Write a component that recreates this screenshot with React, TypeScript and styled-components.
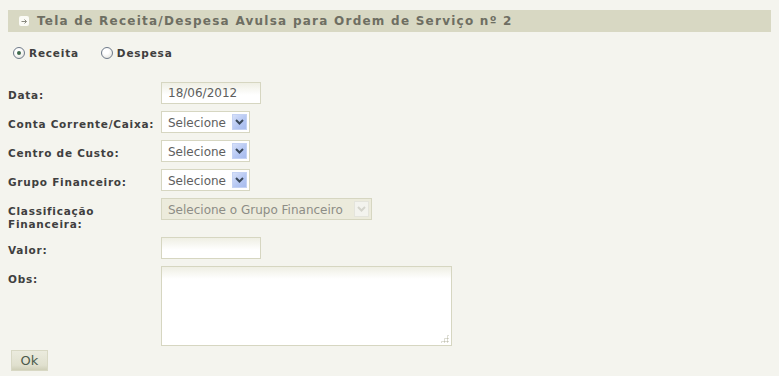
import styled, { createGlobalStyle } from "styled-components";

const GlobalStyle = createGlobalStyle`
  html, body {
    margin: 0;
    padding: 0;
    background: #f4f4ee;
  }
  body {
    font-family: "DejaVu Sans", Verdana, sans-serif;
  }
`;

const Page = styled.div`
  padding: 10px 8px 6px 8px;
`;

const TitleBar = styled.div`
  height: 22px;
  display: flex;
  align-items: center;
  gap: 8px;
  padding-left: 11px;
  background-color: #d8d8c3;
  color: #6e6e62;
  font-size: 12px;
  font-weight: bold;
  letter-spacing: 1.25px;
`;

const TitleIcon = styled.span`
  width: 10px;
  height: 10px;
  border-radius: 2px;
  background: #fbfbf6;
  display: flex;
  align-items: center;
  justify-content: center;
`;

const RadioRow = styled.div`
  display: flex;
  gap: 22px;
  margin-top: 15px;
  padding-left: 5px;
`;

const RadioLabel = styled.label`
  display: flex;
  align-items: center;
  gap: 4px;
  font-size: 10.5px;
  font-weight: bold;
  letter-spacing: 0.8px;
  color: #3f3f3f;
`;

const Radio = styled.input.attrs({ type: "radio" })`
  appearance: none;
  margin: 0;
  width: 12px;
  height: 12px;
  border-radius: 50%;
  border: 1px solid #6f7a8a;
  background: radial-gradient(circle at 40% 35%, #ffffff 30%, #dcdcd4 100%);
  display: grid;
  place-items: center;
  &:checked::after {
    content: "";
    width: 4px;
    height: 4px;
    border-radius: 50%;
    background: #3f6a4c;
  }
`;

const Form = styled.div`
  margin-top: 23px;
  display: flex;
  flex-direction: column;
  gap: 7px;
`;

const Row = styled.div`
  display: flex;
  align-items: flex-start;
`;

const Label = styled.label`
  width: 153px;
  flex-shrink: 0;
  padding-top: 7px;
  font-size: 10.5px;
  font-weight: bold;
  letter-spacing: 0.75px;
  line-height: 12.5px;
  color: #3f3f3f;
`;

const fieldSkin = `
  box-sizing: border-box;
  border: 1px solid #d6d6c1;
  background: linear-gradient(#efefe4 0px, #ffffff 12px);
  font-family: "DejaVu Sans", Verdana, sans-serif;
  font-size: 12px;
  color: #5e5e5e;
  outline: none;
`;

const TextInput = styled.input<{ $w: number }>`
  ${fieldSkin}
  width: ${(p) => p.$w}px;
  height: 22px;
  padding: 0 6px;
`;

const TextArea = styled.textarea`
  ${fieldSkin}
  width: 291px;
  height: 80px;
  margin: 0;
  resize: none;
`;

const SelectWrap = styled.div<{ $w: number; $disabled?: boolean }>`
  position: relative;
  box-sizing: border-box;
  width: ${(p) => p.$w}px;
  height: 22px;
  border: 1px solid #d6d6c1;
  background: ${(p) => (p.$disabled ? "#ecebdc" : "#ffffff")};
`;

const Select = styled.select<{ $disabled?: boolean }>`
  appearance: none;
  width: 100%;
  height: 100%;
  border: none;
  margin: 0;
  padding: 0 0 0 6px;
  background: transparent;
  font-family: "DejaVu Sans", Verdana, sans-serif;
  font-size: 12px;
  color: ${(p) => (p.$disabled ? "#8d8d86" : "#5e5e5e")};
  outline: none;
  opacity: 1;
`;

const Arrow = styled.span<{ $disabled?: boolean }>`
  position: absolute;
  right: 2px;
  top: 2px;
  width: 15px;
  height: 16px;
  pointer-events: none;
  display: flex;
  align-items: center;
  justify-content: center;
  box-sizing: border-box;
  border: 1px solid ${(p) => (p.$disabled ? "#e4e4dc" : "#c4d2f4")};
  background: ${(p) =>
    p.$disabled
      ? "#f3f3ee"
      : "linear-gradient(135deg, #d6e0fa 0%, #b4c6f2 60%, #a8bcee 100%)"};
`;

const Grip = styled.span`
  position: absolute;
  right: 3px;
  bottom: 3px;
  width: 9px;
  height: 9px;
  pointer-events: none;
  background-image: radial-gradient(#c4c4b4 45%, transparent 50%);
  background-size: 3px 3px;
  clip-path: polygon(100% 0, 100% 100%, 0 100%);
`;

const AreaWrap = styled.div`
  position: relative;
  display: flex;
`;

const OkButton = styled.button`
  margin: 4px 0 0 3px;
  width: 37px;
  height: 21px;
  box-sizing: border-box;
  border: 1px solid #d8d8c4;
  background: linear-gradient(#ebebde 0%, #e0e0ce 75%, #cfcfb8 100%);
  font-family: "DejaVu Sans", Verdana, sans-serif;
  font-size: 13px;
  color: #4b5b4b;
  padding: 0;
`;

function Chevron({ color }: { color: string }) {
  return (
    <svg width="9" height="6" viewBox="0 0 9 6">
      <path d="M1 1 L4.5 4.5 L8 1" fill="none" stroke={color} strokeWidth="2" />
    </svg>
  );
}

function FakeSelect(props: { width: number; text: string; disabled?: boolean }) {
  return (
    <SelectWrap $w={props.width} $disabled={props.disabled}>
      <Select disabled={props.disabled} $disabled={props.disabled}>
        <option>{props.text}</option>
      </Select>
      <Arrow $disabled={props.disabled}>
        <Chevron color={props.disabled ? "#d4d4cc" : "#3b4a5c"} />
      </Arrow>
    </SelectWrap>
  );
}

export default function App() {
  return (
    <Page>
      <GlobalStyle />
      <TitleBar>
        <TitleIcon>
          <svg width="7" height="7" viewBox="0 0 7 7">
            <path d="M0.5 3.5 H5.5 M3.5 1.5 L5.5 3.5 L3.5 5.5" fill="none" stroke="#8a8a80" strokeWidth="1" />
          </svg>
        </TitleIcon>
        Tela de Receita/Despesa Avulsa para Ordem de Serviço nº 2
      </TitleBar>

      <RadioRow>
        <RadioLabel>
          <Radio name="tipo" defaultChecked />
          Receita
        </RadioLabel>
        <RadioLabel>
          <Radio name="tipo" />
          Despesa
        </RadioLabel>
      </RadioRow>

      <Form>
        <Row>
          <Label>Data:</Label>
          <TextInput $w={100} defaultValue="18/06/2012" />
        </Row>
        <Row>
          <Label>Conta Corrente/Caixa:</Label>
          <FakeSelect width={89} text="Selecione" />
        </Row>
        <Row>
          <Label>Centro de Custo:</Label>
          <FakeSelect width={89} text="Selecione" />
        </Row>
        <Row>
          <Label>Grupo Financeiro:</Label>
          <FakeSelect width={89} text="Selecione" />
        </Row>
        <Row>
          <Label>
            Classificação
            <br />
            Financeira:
          </Label>
          <FakeSelect width={211} text="Selecione o Grupo Financeiro" disabled />
        </Row>
        <Row>
          <Label>Valor:</Label>
          <TextInput $w={100} />
        </Row>
        <Row>
          <Label>Obs:</Label>
          <AreaWrap>
            <TextArea />
            <Grip />
          </AreaWrap>
        </Row>
      </Form>
      <OkButton>Ok</OkButton>
    </Page>
  );
}
